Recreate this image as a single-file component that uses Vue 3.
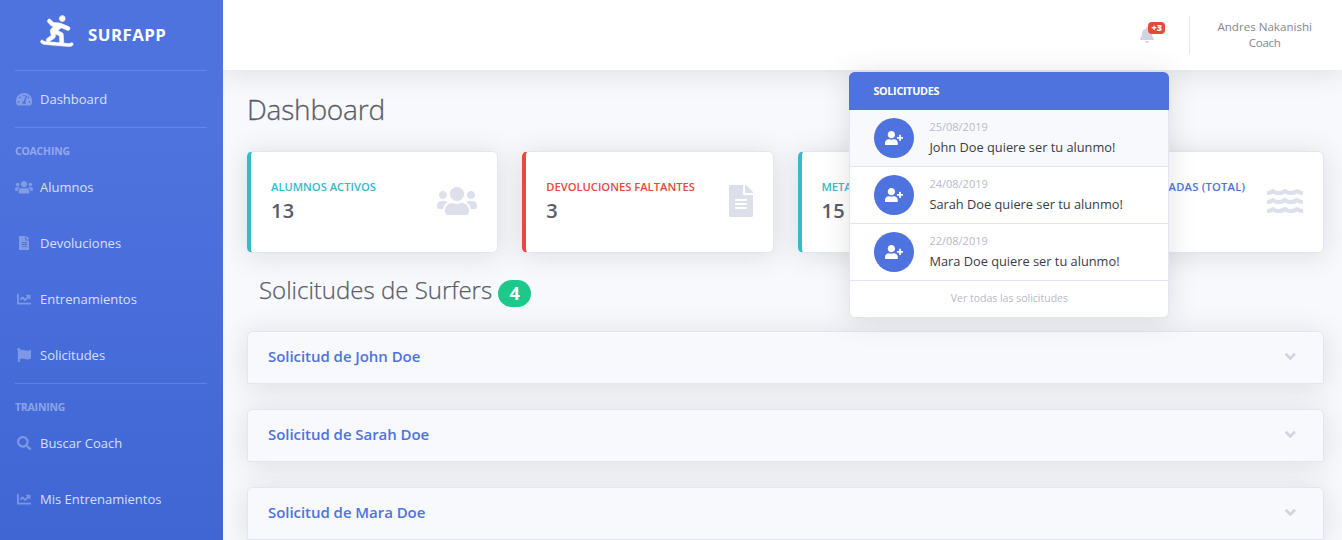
<script setup>
const wave = 'c-21.5-2.4-42.1-10.5-57.9-22.9-14.1-11.1-34.2-11.3-48.2 0-37.9 30.4-107.2 30.4-145.7-1.5-13.5-11.2-33-9.1-46.7 1.8-38 30.1-106.9 30-145.2-1.7-13.5-11.2-33.3-8.9-47.1 2-15.5 12.2-36 20.1-57.7 22.4-7.9.8-13.6 7.8-13.6 15.7v32.2c0 9.1 7.6 16.8 16.7 16 28.8-2.5 56.1-11.4 79.4-25.9 56.5 34.6 137 34.1 192 0 56.5 34.6 137 34.1 192 0 23.3 14.2 50.9 23.3 79.1 25.8 9.1.8 16.7-6.9 16.7-16v-31.6c.1-8-5.7-15.4-13.8-16.3z'

const icons = {
  gauge: { w: 576, d: 'M288 32C128.94 32 0 160.94 0 320c0 52.8 14.25 102.26 39.06 144.8 5.61 9.62 16.3 15.2 27.44 15.2h443c11.14 0 21.83-5.58 27.44-15.2C561.75 422.26 576 372.8 576 320c0-159.06-128.94-288-288-288zm0 64c14.71 0 26.58 10.13 30.32 23.65-1.11 2.26-2.64 4.23-3.45 6.67l-9.22 27.67c-5.13 3.49-10.97 6.01-17.64 6.01-17.67 0-32-14.33-32-32S270.33 96 288 96zM96 384c-17.67 0-32-14.33-32-32s14.33-32 32-32 32 14.33 32 32-14.33 32-32 32zm48-160c-17.67 0-32-14.33-32-32s14.33-32 32-32 32 14.33 32 32-14.33 32-32 32zm246.77-72.41l-61.33 184C343.13 347.33 352 364.54 352 384c0 11.72-3.38 22.55-8.88 32H232.88c-5.5-9.45-8.88-20.28-8.88-32 0-33.94 26.5-61.43 59.9-63.59l61.34-184.01c4.17-12.56 17.73-19.45 30.36-15.17 12.57 4.19 19.35 17.79 15.17 30.36zm14.66 57.2l15.52-46.55c3.47-1.29 7.13-2.23 11.05-2.23 17.67 0 32 14.33 32 32s-14.33 32-32 32c-11.38-.01-20.89-6.28-26.57-15.22zM480 384c-17.67 0-32-14.33-32-32s14.33-32 32-32 32 14.33 32 32-14.33 32-32 32z' },
  users: { w: 640, d: 'M96 224c35.3 0 64-28.7 64-64s-28.7-64-64-64-64 28.7-64 64 28.7 64 64 64zm448 0c35.3 0 64-28.7 64-64s-28.7-64-64-64-64 28.7-64 64 28.7 64 64 64zm32 32h-64c-17.6 0-33.5 7.1-45.1 18.6 40.3 22.1 68.9 62 75.1 109.4h66c17.7 0 32-14.3 32-32v-32c0-35.3-28.7-64-64-64zm-256 0c61.9 0 112-50.1 112-112S381.9 32 320 32 208 82.1 208 144s50.1 112 112 112zm76.8 32h-8.3c-20.8 10-43.9 16-68.5 16s-47.6-6-68.5-16h-8.3C179.6 288 128 339.6 128 403.2V432c0 26.5 21.5 48 48 48h288c26.5 0 48-21.5 48-48v-28.8c0-63.6-51.6-115.2-115.2-115.2zm-223.7-13.4C161.5 263.1 145.6 256 128 256H64c-35.3 0-64 28.7-64 64v32c0 17.7 14.3 32 32 32h65.9c6.3-47.4 34.9-87.3 75.2-109.4z' },
  file: { w: 384, d: 'M224 136V0H24C10.7 0 0 10.7 0 24v464c0 13.3 10.7 24 24 24h336c13.3 0 24-10.7 24-24V160H248c-13.2 0-24-10.8-24-24zm64 236c0 6.6-5.4 12-12 12H108c-6.6 0-12-5.4-12-12v-8c0-6.6 5.4-12 12-12h168c6.6 0 12 5.4 12 12v8zm0-64c0 6.6-5.4 12-12 12H108c-6.6 0-12-5.4-12-12v-8c0-6.6 5.4-12 12-12h168c6.6 0 12 5.4 12 12v8zm0-72v8c0 6.6-5.4 12-12 12H108c-6.6 0-12-5.4-12-12v-8c0-6.6 5.4-12 12-12h168c6.6 0 12 5.4 12 12zm96-114.1v6.1H256V0h6.1c6.4 0 12.5 2.5 17 7l97.9 98c4.5 4.5 7 10.6 7 16.9z' },
  chart: { w: 512, d: 'M496 384H64V80c0-8.84-7.16-16-16-16H16C7.16 64 0 71.16 0 80v336c0 17.67 14.33 32 32 32h464c8.84 0 16-7.16 16-16v-32c0-8.84-7.16-16-16-16zM464 96H345.94c-21.38 0-32.09 25.85-16.97 40.97l32.4 32.4L288 242.75l-73.37-73.37c-12.5-12.5-32.76-12.5-45.25 0l-68.69 68.69c-6.25 6.25-6.25 16.38 0 22.63l22.62 22.62c6.25 6.25 16.38 6.25 22.63 0L192 237.25l73.37 73.37c12.5 12.5 32.76 12.5 45.25 0l96-96 32.4 32.4c15.12 15.12 40.97 4.41 40.97-16.97V112c.01-8.84-7.15-16-15.99-16z' },
  flag: { w: 512, d: 'M349.565 98.783C295.978 98.783 251.721 64 184.348 64c-24.955 0-47.309 4.384-68.045 12.013a55.947 55.947 0 0 0 3.586-23.562C118.117 24.015 94.806 1.206 66.338.048 34.345-1.254 8 24.296 8 56c0 19.026 9.497 35.825 24 45.945V488c0 13.255 10.745 24 24 24h16c13.255 0 24-10.745 24-24v-94.4c28.311-12.064 63.582-22.122 114.435-22.122 53.588 0 97.844 34.783 165.217 34.783 48.169 0 86.667-16.294 122.505-40.858C506.84 359.452 512 349.571 512 339.045v-243.1c0-23.393-24.269-38.87-45.485-29.016-34.338 15.948-76.454 31.854-116.95 31.854z' },
  search: { w: 512, d: 'M505 442.7L405.3 343c-4.5-4.5-10.6-7-17-7H372c27.6-35.3 44-79.7 44-128C416 93.1 322.9 0 208 0S0 93.1 0 208s93.1 208 208 208c48.3 0 92.7-16.4 128-44v16.3c0 6.4 2.5 12.5 7 17l99.7 99.7c9.4 9.4 24.6 9.4 33.9 0l28.3-28.3c9.4-9.4 9.4-24.6.1-34zM208 336c-70.7 0-128-57.2-128-128 0-70.7 57.2-128 128-128 70.7 0 128 57.2 128 128 0 70.7-57.2 128-128 128z' },
  bell: { w: 448, d: 'M224 512c35.32 0 63.97-28.65 63.97-64H160.03c0 35.35 28.65 64 63.97 64zm215.39-149.71c-19.32-20.76-55.47-51.99-55.47-154.29 0-77.7-54.48-139.9-127.94-155.16V32c0-17.67-14.32-32-31.98-32s-31.98 14.33-31.98 32v20.84C118.56 68.1 64.08 130.3 64.08 208c0 102.3-36.15 133.53-55.47 154.29-6 6.45-8.66 14.16-8.61 21.71.11 16.4 12.98 32 32.1 32h383.8c19.12 0 32-15.6 32.1-32 .05-7.55-2.61-15.27-8.61-21.71z' },
  userPlus: { w: 640, d: 'M624 208h-64v-64c0-8.8-7.2-16-16-16h-32c-8.8 0-16 7.2-16 16v64h-64c-8.8 0-16 7.2-16 16v32c0 8.8 7.2 16 16 16h64v64c0 8.8 7.2 16 16 16h32c8.8 0 16-7.2 16-16v-64h64c8.8 0 16-7.2 16-16v-32c0-8.8-7.2-16-16-16zm-400 48c70.7 0 128-57.3 128-128S294.7 0 224 0 96 57.3 96 128s57.3 128 128 128zm89.6 32h-16.7c-22.2 10.2-46.9 16-72.9 16s-50.6-5.8-72.9-16h-16.7C60.2 288 0 348.2 0 422.4V464c0 26.5 21.5 48 48 48h352c26.5 0 48-21.5 48-48v-41.6c0-74.2-60.2-134.4-134.4-134.4z' },
  angle: { w: 320, d: 'M143 352.3L7 216.3c-9.4-9.4-9.4-24.6 0-33.9l22.6-22.6c9.4-9.4 24.6-9.4 33.9 0l96.4 96.4 96.4-96.4c9.4-9.4 24.6-9.4 33.9 0l22.6 22.6c9.4 9.4 9.4 24.6 0 33.9l-136 136c-9.2 9.4-24.4 9.4-33.8 0z' },
  board: { w: 512, d: 'M432 96c26.5 0 48-21.5 48-48S458.5 0 432 0s-48 21.5-48 48 21.5 48 48 48zm28.8 153.6c5.8 4.3 12.5 6.4 19.2 6.4 9.7 0 19.3-4.4 25.6-12.8 10.6-14.1 7.8-34.2-6.4-44.8l-111.4-83.5c-13.8-10.3-29.1-18.4-45.4-23.8l-63.7-21.2-26.1-52.1C244.7 2 225.5-4.4 209.7 3.5c-15.8 7.9-22.2 27.1-14.3 42.9l29.1 58.1c5.7 11.4 15.6 19.9 27.7 24l16.4 5.5-41.2 20.6c-21.8 10.9-35.4 32.8-35.4 57.2v53.1l-74.1 24.7c-16.8 5.6-25.8 23.7-20.2 40.5 1.7 5.2 4.9 9.4 8.7 12.9l-38.7-14.1c-9.7-3.5-17.4-10.6-21.8-20-5.6-12-19.9-17.2-31.9-11.6s-17.2 19.9-11.6 31.9c9.8 21 27.1 36.9 48.9 44.8l364.8 132.7c9.7 3.5 19.7 5.3 29.7 5.3 12.5 0 24.9-2.7 36.5-8.2 12-5.6 17.2-19.9 11.6-31.9S474 454.7 462 460.3c-9.3 4.4-19.8 4.8-29.5 1.3l-90.8-33.1c8.7-4.1 15.6-11.8 17.8-21.9l21.9-102c3.9-18.2-3.2-37.2-18.1-48.4l-52-39 66-30.5 83.5 62.9zm-144.4 51.7l-19.7 92c-1.5 7.1-.1 13.9 2.8 20l-169.4-61.6c2.7-.2 5.4-.4 8-1.3l85-28.4c19.6-6.5 32.8-24.8 32.8-45.5V256l60.5 45.3z' },
  water: { w: 576, d: 'M562.1 383.9' + wave + 'M562.1 239.9' + wave + 'M562.1 95.9' + wave },
}

const sections = [
  { items: [{ icon: 'gauge', label: 'Dashboard' }] },
  {
    heading: 'COACHING',
    items: [
      { icon: 'users', label: 'Alumnos' },
      { icon: 'file', label: 'Devoluciones' },
      { icon: 'chart', label: 'Entrenamientos' },
      { icon: 'flag', label: 'Solicitudes' },
    ],
  },
  {
    heading: 'TRAINING',
    items: [
      { icon: 'search', label: 'Buscar Coach' },
      { icon: 'chart', label: 'Mis Entrenamientos' },
    ],
  },
]

const cards = [
  { label: 'ALUMNOS ACTIVOS', value: '13', icon: 'users', tone: 'info' },
  { label: 'DEVOLUCIONES FALTANTES', value: '3', icon: 'file', tone: 'danger' },
  { label: 'METAS', value: '15', icon: 'flag', tone: 'info' },
  { label: 'OLAS SURFICADAS (TOTAL)', value: '', icon: 'water', tone: 'primary' },
]

const requests = [
  { name: 'John Doe', date: '25/08/2019' },
  { name: 'Sarah Doe', date: '24/08/2019' },
  { name: 'Mara Doe', date: '22/08/2019' },
]
</script>

<template>
  <div class="app">
    <aside class="sidebar">
      <div class="brand">
        <svg class="ico brand-ico" viewBox="0 0 512 512"><path :d="icons.board.d" /></svg>
        <span>SURFAPP</span>
      </div>
      <nav v-for="(s, i) in sections" :key="i" class="section">
        <div v-if="s.heading" class="heading">{{ s.heading }}</div>
        <a v-for="it in s.items" :key="it.label" class="link">
          <span class="link-ico">
            <svg class="ico" :viewBox="`0 0 ${icons[it.icon].w} 512`"><path :d="icons[it.icon].d" /></svg>
          </span>
          <span>{{ it.label }}</span>
        </a>
      </nav>
    </aside>

    <div class="main">
      <header class="topbar">
        <div class="bell">
          <svg class="ico" viewBox="0 0 448 512"><path :d="icons.bell.d" /></svg>
          <span class="count">+3</span>

          <div class="dropdown">
            <div class="dd-head">SOLICITUDES</div>
            <div v-for="r in requests" :key="r.name" class="dd-item">
              <span class="circle">
                <svg class="ico" viewBox="0 0 640 512"><path :d="icons.userPlus.d" /></svg>
              </span>
              <div>
                <div class="date">{{ r.date }}</div>
                <div class="msg">{{ r.name }} quiere ser tu alunmo!</div>
              </div>
            </div>
            <div class="dd-foot">Ver todas las solicitudes</div>
          </div>
        </div>
        <div class="sep"></div>
        <div class="user">
          <div>Andres Nakanishi</div>
          <div class="role">Coach</div>
        </div>
      </header>

      <main class="content">
        <h1>Dashboard</h1>
        <div class="cards">
          <div v-for="c in cards" :key="c.label" class="card" :class="c.tone">
            <div>
              <div class="label">{{ c.label }}</div>
              <div class="value">{{ c.value }}</div>
            </div>
            <svg class="ico" :viewBox="`0 0 ${icons[c.icon].w} 512`"><path :d="icons[c.icon].d" /></svg>
          </div>
        </div>
        <h2>Solicitudes de Surfers <span class="pill">4</span></h2>
        <div class="list">
          <div v-for="r in requests" :key="r.name" class="row">
            <span>Solicitud de {{ r.name }}</span>
            <svg class="ico" viewBox="0 0 320 512"><path :d="icons.angle.d" /></svg>
          </div>
        </div>
      </main>
    </div>
  </div>
</template>

<style>
body {
  margin: 0;
  overflow: hidden;
}
</style>

<style scoped>
.app {
  display: flex;
  height: 540px;
  overflow: hidden;
  background: #f8f9fc;
  color: #5a5c69;
  font-family: "Open Sans", "Noto Sans", sans-serif;
}
.app * {
  box-sizing: border-box;
}
.ico {
  display: block;
  flex: none;
  height: 1em;
  width: auto;
  fill: currentColor;
}

.sidebar {
  position: relative;
  z-index: 3;
  flex: none;
  width: 223px;
  padding: 0 16px 0 15px;
  background: linear-gradient(180deg, #4e73df 10%, #224abe 100%) 0 0 / 100% 1400px no-repeat;
  color: #fff;
}
.brand {
  display: flex;
  align-items: center;
  height: 70px;
  padding: 0 0 2px 24px;
  gap: 17px;
  font-size: 16.8px;
  font-weight: 700;
  letter-spacing: 0.5px;
}
.brand-ico {
  overflow: visible;
  font-size: 32px;
  margin-top: -1px;
  stroke: currentColor;
  stroke-width: 8;
  transform: rotate(-15deg);
}
.section {
  border-top: 1px solid rgba(255, 255, 255, 0.15);
}
.heading {
  height: 31px;
  padding-top: 16px;
  font-size: 10.4px;
  line-height: 15px;
  font-weight: 700;
  letter-spacing: -0.15px;
  color: rgba(255, 255, 255, 0.4);
}
.link {
  display: flex;
  align-items: center;
  height: 56px;
  gap: 7px;
  font-size: 13px;
  color: rgba(255, 255, 255, 0.8);
}
.link-ico {
  display: flex;
  justify-content: center;
  width: 18px;
  font-size: 14.4px;
  color: rgba(255, 255, 255, 0.3);
}

.main {
  flex: 1;
  min-width: 0;
}
.topbar {
  position: relative;
  z-index: 2;
  display: flex;
  align-items: center;
  justify-content: flex-end;
  height: 70px;
  padding-right: 30px;
  background: #fff;
  box-shadow: 0 2.4px 28px 0 rgba(58, 59, 69, 0.15);
}
.bell {
  position: relative;
  margin-right: 35px;
  font-size: 16px;
  color: #d1d3e2;
}
.count {
  position: absolute;
  left: 8px;
  top: -5px;
  width: 17px;
  height: 12px;
  border-radius: 4px;
  background: #e74a3b;
  color: #fff;
  font-size: 9px;
  line-height: 12px;
  font-weight: 800;
  text-align: center;
}
.sep {
  width: 1px;
  height: 38px;
  margin-right: 27px;
  background: #e3e6f0;
}
.user {
  color: #858796;
  font-size: 11.6px;
  line-height: 16px;
  text-align: center;
}
.role {
  letter-spacing: -0.3px;
}

.dropdown {
  position: absolute;
  top: 45px;
  right: -15px;
  width: 320px;
  border: 1px solid #e3e6f0;
  border-radius: 5.6px;
  background: #fff;
  box-shadow: 0 2.4px 28px 0 rgba(58, 59, 69, 0.15);
}
.dd-head {
  height: 38px;
  margin: -1px -1px 0;
  padding-left: 24px;
  border-radius: 5.6px 5.6px 0 0;
  background: #4e73df;
  color: #fff;
  font-size: 10.8px;
  line-height: 37px;
  font-weight: 700;
  letter-spacing: -0.3px;
}
.dd-item {
  display: flex;
  align-items: center;
  gap: 15px;
  height: 57px;
  padding-left: 24px;
  border-bottom: 1px solid #e3e6f0;
}
.dd-head + .dd-item {
  background: #f8f9fc;
}
.circle {
  display: flex;
  align-items: center;
  justify-content: center;
  width: 40px;
  height: 40px;
  border-radius: 50%;
  background: #4e73df;
  color: #fff;
  font-size: 14.6px;
}
.date {
  margin-top: -1px;
  color: #b7b9cc;
  font-size: 11px;
  line-height: 18px;
}
.msg {
  color: #3a3b45;
  font-size: 12.8px;
  line-height: 22px;
}
.dd-foot {
  height: 36px;
  color: #b7b9cc;
  font-size: 10.5px;
  line-height: 34px;
  text-align: center;
}

.content {
  padding: 0 18px 0 24px;
}
h1 {
  margin: 0;
  padding-top: 20px;
  font-size: 28px;
  line-height: 38px;
  font-weight: 300;
  letter-spacing: -0.2px;
  -webkit-text-stroke: 0.3px currentColor;
}
.cards {
  display: grid;
  grid-template-columns: repeat(4, 1fr);
  gap: 24px;
  margin-top: 23px;
}
.card {
  display: flex;
  align-items: center;
  justify-content: space-between;
  height: 102px;
  padding: 0 20px 0 20px;
  border: 1px solid #e3e6f0;
  border-left: 4px solid;
  border-radius: 5.6px;
  background: #fff;
  box-shadow: 0 2.4px 28px 0 rgba(58, 59, 69, 0.15);
}
.card .ico {
  margin-top: -2px;
  font-size: 32px;
  color: #dddfeb;
}
.label {
  font-size: 11.2px;
  line-height: 16px;
  font-weight: 600;
  white-space: nowrap;
}
.value {
  height: 28px;
  margin-top: 2px;
  color: #5a5c69;
  font-size: 20px;
  line-height: 28px;
  font-weight: 600;
  letter-spacing: 0.3px;
}
.info {
  border-left-color: #36b9cc;
  color: #36b9cc;
}
.danger {
  border-left-color: #e74a3b;
  color: #e74a3b;
}
.primary {
  border-left-color: #4e73df;
  color: #4e73df;
}
.primary .label {
  letter-spacing: 0.22px;
}
h2 {
  display: flex;
  align-items: center;
  gap: 6px;
  height: 30px;
  margin: 22px 0 26px 12px;
  font-size: 24px;
  line-height: 28px;
  font-weight: 300;
  -webkit-text-stroke: 0.25px currentColor;
}
.pill {
  width: 33px;
  height: 27px;
  margin-top: 7px;
  border-radius: 14px;
  background: #1cc88a;
  color: #fff;
  font-size: 18px;
  line-height: 26px;
  font-weight: 700;
  text-align: center;
  -webkit-text-stroke: 0;
}
.list {
  display: grid;
  gap: 25px;
}
.row {
  display: flex;
  align-items: center;
  justify-content: space-between;
  height: 53px;
  padding: 0 27px 2px 20px;
  border: 1px solid #e3e6f0;
  border-radius: 5.6px 5.6px 2px 2px;
  background: #f8f9fc;
  box-shadow: 0 2.4px 28px 0 rgba(58, 59, 69, 0.15);
  color: #4e73df;
  font-size: 15px;
  font-weight: 600;
  letter-spacing: -0.05px;
}
.row span {
  margin-top: -2px;
}
.row .ico {
  font-size: 17px;
  color: #d1d3e2;
}
</style>
